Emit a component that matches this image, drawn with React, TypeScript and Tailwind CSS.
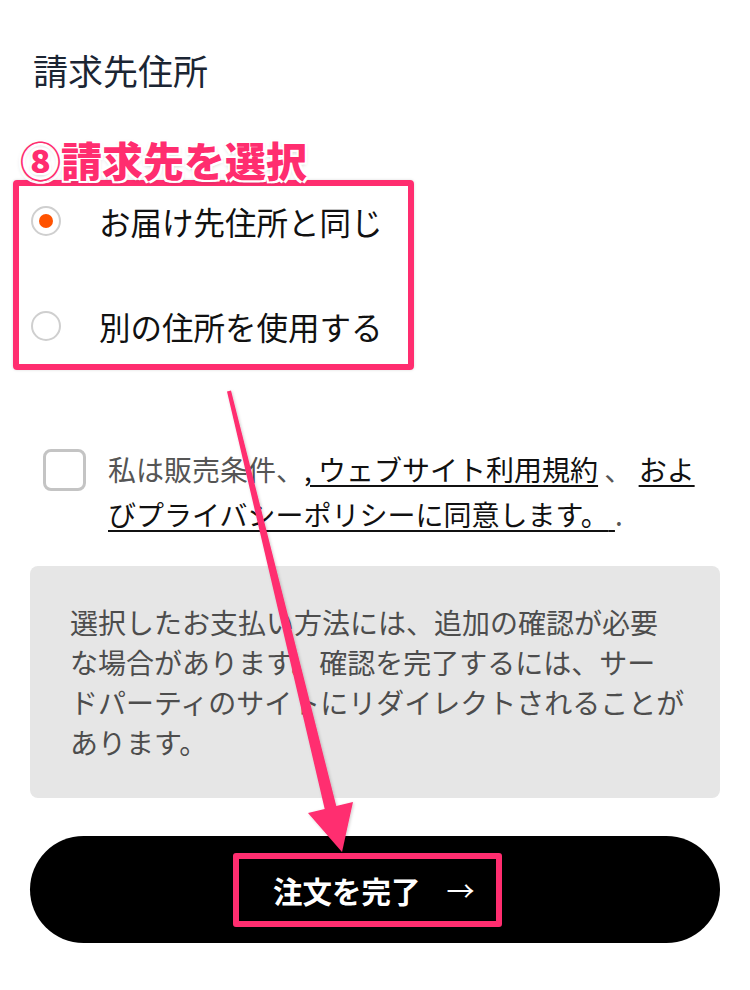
import React from "react";

const jp = "font-['Noto_Sans_CJK_JP','Noto_Sans',sans-serif]";

export default function App() {
  return (
    <div className={`relative w-[750px] h-[990px] bg-white overflow-hidden ${jp}`}>
      <h2 className="pt-[49px] pl-[33px] text-[35px] leading-[42px] text-[#1b2533] font-normal">
        請求先住所
      </h2>

      {/* radio group */}
      <div className="mt-[100px] flex flex-col gap-[45px]">
        <label className="h-[60px] flex items-center">
          <span className="ml-[31px] w-[30px] h-[30px] rounded-full border-2 border-[#cfcfcf] flex items-center justify-center">
            <span className="w-[14px] h-[14px] rounded-full bg-[#ff5200]" />
          </span>
          <span className="ml-[38px] text-[31.5px] leading-[40px] text-[#111]">お届け先住所と同じ</span>
        </label>
        <label className="h-[60px] flex items-center">
          <span className="ml-[31px] w-[30px] h-[30px] rounded-full border-2 border-[#cfcfcf]" />
          <span className="ml-[38px] text-[31.5px] leading-[40px] text-[#111]">別の住所を使用する</span>
        </label>
      </div>

      {/* consent */}
      <div className="mt-[91px] flex items-start">
        <span className="ml-[43px] mt-[2px] w-[43px] h-[42px] rounded-[8px] border-[3px] border-[#c4c4c4] shrink-0" />
        <p className="ml-[22px] text-[28px] leading-[45px] text-[#555] whitespace-nowrap">
          私は販売条件、
          <span className="underline decoration-[2px] underline-offset-[4px] text-[#111]">, ウェブサイト利用規約</span>
          {" 、 "}
          <span className="underline decoration-[2px] underline-offset-[4px] text-[#111]">
            およ
            <br />
            びプライバシーポリシーに同意します。{" "}
          </span>
          {" ."}
        </p>
      </div>

      {/* notice */}
      <div className="mt-[29px] ml-[30px] w-[690px] h-[232px] rounded-[8px] bg-[#e6e6e6] pt-[36px] pl-[40px]">
        <p className="text-[28px] leading-[40px] text-[#4d4d4d]">
          選択したお支払い方法には、追加の確認が必要
          <br />
          な場合があります。確認を完了するには、サー
          <br />
          ドパーティのサイトにリダイレクトされることが
          <br />
          あります。
        </p>
      </div>

      {/* button */}
      <button className="mt-[38px] ml-[30px] w-[690px] h-[107px] rounded-full bg-black flex items-center pl-[203px]">
        <span className="w-[269px] h-[74px] border-[6px] border-[#ff2d6f] rounded-[3px] flex items-center pl-[34px] text-white">
          <span className="text-[29.5px] leading-[40px] font-bold">注文を完了</span>
          <span className="ml-[26px] text-[28px] leading-[40px] font-normal">→</span>
        </span>
      </button>

      {/* annotation: pink frame around radio group */}
      <div className="absolute left-[13px] top-[180px] w-[401px] h-[190px] border-[6px] border-[#ff2d6f] rounded-[4px] [box-shadow:0_0_3px_rgba(0,0,0,0.15)]" />

      {/* annotation label */}
      <div className="absolute left-[20px] top-[133px] text-[41px] leading-[52px] font-black text-[#ff2d6f] [text-shadow:0_0_3px_#fff,0_0_3px_#fff,2px_2px_0_#fff,-2px_-2px_0_#fff,2px_-2px_0_#fff,-2px_2px_0_#fff,0_2px_4px_rgba(0,0,0,0.25)]">
        ⑧請求先を選択
      </div>

      {/* annotation arrow */}
      <svg className="absolute left-0 top-0 pointer-events-none" width="750" height="990" viewBox="0 0 750 990">
        <defs>
          <filter id="sh" x="-20%" y="-5%" width="140%" height="110%">
            <feDropShadow dx="1" dy="1" stdDeviation="1.5" floodColor="#000" floodOpacity="0.2" />
          </filter>
        </defs>
        <polygon
          filter="url(#sh)"
          fill="#ff2d6f"
          points="227,391.5 231,390.5 336.3,806.1 353,802 342,852 308,813 324.7,808.9"
          strokeLinejoin="round"
        />
      </svg>
    </div>
  );
}
